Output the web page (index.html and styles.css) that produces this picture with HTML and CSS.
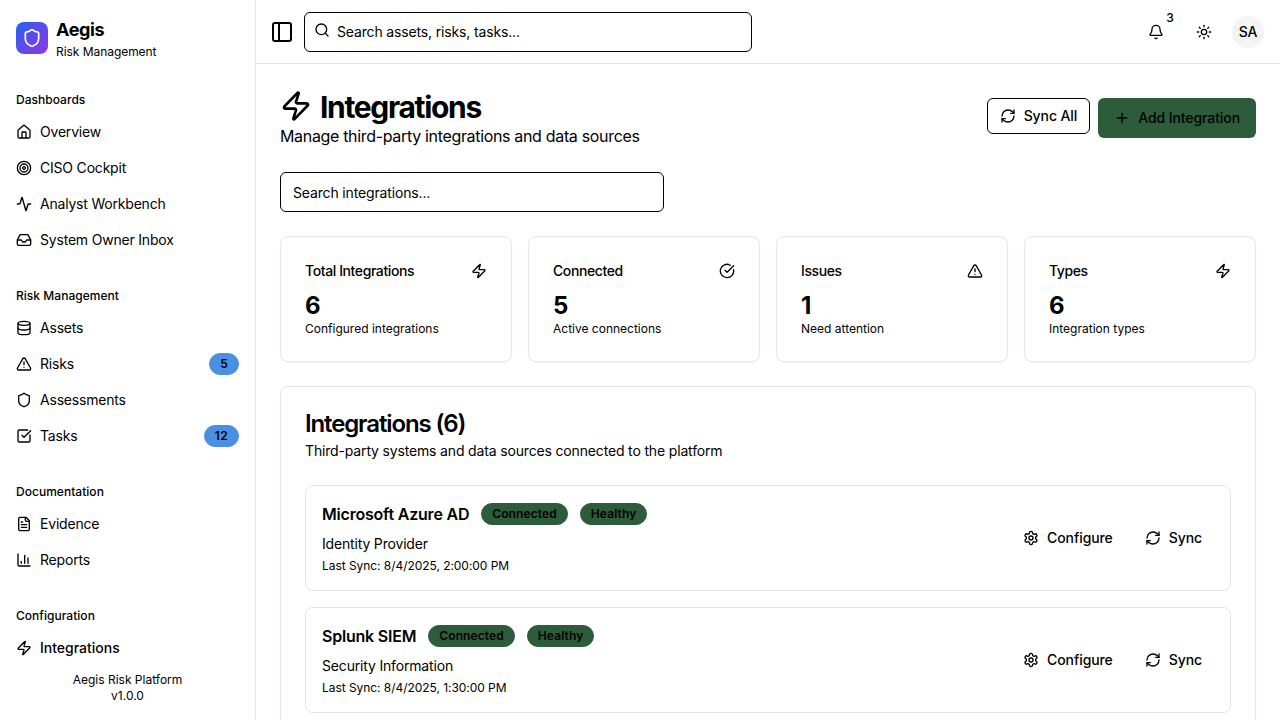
FILE: index.html
```html
<!DOCTYPE html>
<html lang="en">
<head>
<meta charset="utf-8">
<title>Aegis Risk Management</title>
<link rel="stylesheet" href="styles.css">
</head>
<body>
<svg class="sprite" aria-hidden="true">
  <symbol id="shield" viewBox="0 0 24 24"><path d="M20 13c0 5-3.5 7.5-7.66 8.95a1 1 0 0 1-.67-.01C7.5 20.5 4 18 4 13V6a1 1 0 0 1 1-1c2 0 4.5-1.2 6.24-2.72a1.17 1.17 0 0 1 1.52 0C14.51 3.81 17 5 19 5a1 1 0 0 1 1 1z"/></symbol>
  <symbol id="house" viewBox="0 0 24 24"><path d="M15 21v-8a1 1 0 0 0-1-1h-4a1 1 0 0 0-1 1v8"/><path d="M3 10a2 2 0 0 1 .709-1.528l7-5.999a2 2 0 0 1 2.582 0l7 5.999A2 2 0 0 1 21 10v9a2 2 0 0 1-2 2H5a2 2 0 0 1-2-2z"/></symbol>
  <symbol id="target" viewBox="0 0 24 24"><circle cx="12" cy="12" r="10"/><circle cx="12" cy="12" r="6"/><circle cx="12" cy="12" r="2"/></symbol>
  <symbol id="activity" viewBox="0 0 24 24"><path d="M22 12h-2.48a2 2 0 0 0-1.93 1.46l-2.35 8.36a.25.25 0 0 1-.48 0L9.24 2.18a.25.25 0 0 0-.48 0l-2.35 8.36A2 2 0 0 1 4.49 12H2"/></symbol>
  <symbol id="inbox" viewBox="0 0 24 24"><polyline points="22 12 16 12 14 15 10 15 8 12 2 12"/><path d="M5.45 5.11 2 12v6a2 2 0 0 0 2 2h16a2 2 0 0 0 2-2v-6l-3.45-6.89A2 2 0 0 0 16.76 4H7.24a2 2 0 0 0-1.79 1.11z"/></symbol>
  <symbol id="database" viewBox="0 0 24 24"><ellipse cx="12" cy="5" rx="9" ry="3"/><path d="M3 5V19A9 3 0 0 0 21 19V5"/><path d="M3 12A9 3 0 0 0 21 12"/></symbol>
  <symbol id="alert" viewBox="0 0 24 24"><path d="m21.73 18-8-14a2 2 0 0 0-3.48 0l-8 14A2 2 0 0 0 4 21h16a2 2 0 0 0 1.73-3"/><path d="M12 9v4"/><path d="M12 17h.01"/></symbol>
  <symbol id="check-square" viewBox="0 0 24 24"><path d="M21 10.5V19a2 2 0 0 1-2 2H5a2 2 0 0 1-2-2V5a2 2 0 0 1 2-2h12.5"/><path d="m9 11 3 3L22 4"/></symbol>
  <symbol id="file" viewBox="0 0 24 24"><path d="M15 2H6a2 2 0 0 0-2 2v16a2 2 0 0 0 2 2h12a2 2 0 0 0 2-2V7Z"/><path d="M14 2v4a2 2 0 0 0 2 2h4"/><path d="M10 9H8"/><path d="M16 13H8"/><path d="M16 17H8"/></symbol>
  <symbol id="chart" viewBox="0 0 24 24"><path d="M3 3v16a2 2 0 0 0 2 2h16"/><path d="M18 17V9"/><path d="M13 17V5"/><path d="M8 17v-3"/></symbol>
  <symbol id="zap" viewBox="0 0 24 24"><path d="M4 14a1 1 0 0 1-.78-1.63l9.9-10.2a.5.5 0 0 1 .86.46l-1.92 6.02A1 1 0 0 0 13 10h7a1 1 0 0 1 .78 1.63l-9.9 10.2a.5.5 0 0 1-.86-.46l1.92-6.02A1 1 0 0 0 11 14z"/></symbol>
  <symbol id="panel" viewBox="0 0 24 24"><rect width="18" height="18" x="3" y="3" rx="2"/><path d="M9 3v18"/></symbol>
  <symbol id="search" viewBox="0 0 24 24"><circle cx="11" cy="11" r="8"/><path d="m21 21-4.3-4.3"/></symbol>
  <symbol id="bell" viewBox="0 0 24 24"><path d="M10.268 21a2 2 0 0 0 3.464 0"/><path d="M3.262 15.326A1 1 0 0 0 4 17h16a1 1 0 0 0 .74-1.673C19.41 13.956 18 12.499 18 8A6 6 0 0 0 6 8c0 4.499-1.411 5.956-2.738 7.326"/></symbol>
  <symbol id="sun" viewBox="0 0 24 24"><circle cx="12" cy="12" r="4"/><path d="M12 2v2"/><path d="M12 20v2"/><path d="m4.93 4.93 1.41 1.41"/><path d="m17.66 17.66 1.41 1.41"/><path d="M2 12h2"/><path d="M20 12h2"/><path d="m6.34 17.66-1.41 1.41"/><path d="m19.07 4.93-1.41 1.41"/></symbol>
  <symbol id="refresh" viewBox="0 0 24 24"><path d="M3 12a9 9 0 0 1 9-9 9.75 9.75 0 0 1 6.74 2.74L21 8"/><path d="M21 3v5h-5"/><path d="M21 12a9 9 0 0 1-9 9 9.75 9.75 0 0 1-6.74-2.74L3 16"/><path d="M8 16H3v5"/></symbol>
  <symbol id="plus" viewBox="0 0 24 24"><path d="M5 12h14"/><path d="M12 5v14"/></symbol>
  <symbol id="check-circle" viewBox="0 0 24 24"><path d="M21.801 10A10 10 0 1 1 17 3.335"/><path d="m9 11 3 3L22 4"/></symbol>
  <symbol id="gear" viewBox="0 0 24 24"><path d="M12.22 2h-.44a2 2 0 0 0-2 2v.18a2 2 0 0 1-1 1.73l-.43.25a2 2 0 0 1-2 0l-.15-.08a2 2 0 0 0-2.73.73l-.22.38a2 2 0 0 0 .73 2.73l.15.1a2 2 0 0 1 1 1.72v.51a2 2 0 0 1-1 1.74l-.15.09a2 2 0 0 0-.73 2.73l.22.38a2 2 0 0 0 2.73.73l.15-.08a2 2 0 0 1 2 0l.43.25a2 2 0 0 1 1 1.73V20a2 2 0 0 0 2 2h.44a2 2 0 0 0 2-2v-.18a2 2 0 0 1 1-1.73l.43-.25a2 2 0 0 1 2 0l.15.08a2 2 0 0 0 2.73-.73l.22-.39a2 2 0 0 0-.73-2.73l-.15-.08a2 2 0 0 1-1-1.74v-.5a2 2 0 0 1 1-1.74l.15-.09a2 2 0 0 0 .73-2.73l-.22-.38a2 2 0 0 0-2.73-.73l-.15.08a2 2 0 0 1-2 0l-.43-.25a2 2 0 0 1-1-1.73V4a2 2 0 0 0-2-2z"/><circle cx="12" cy="12" r="3"/></symbol>
</svg>

<div class="app">
  <aside class="sidebar">
    <div class="brand">
      <div class="brand-logo"><svg class="icon icon-logo"><use href="#shield"/></svg></div>
      <div>
        <div class="brand-name">Aegis</div>
        <div class="brand-sub">Risk Management</div>
      </div>
    </div>
    <nav class="nav">
      <section class="nav-group">
        <div class="nav-label">Dashboards</div>
        <div class="nav-list">
          <a class="nav-item"><svg class="icon"><use href="#house"/></svg><span>Overview</span></a>
          <a class="nav-item"><svg class="icon"><use href="#target"/></svg><span>CISO Cockpit</span></a>
          <a class="nav-item"><svg class="icon"><use href="#activity"/></svg><span>Analyst Workbench</span></a>
          <a class="nav-item"><svg class="icon"><use href="#inbox"/></svg><span>System Owner Inbox</span></a>
        </div>
      </section>
      <section class="nav-group">
        <div class="nav-label">Risk Management</div>
        <div class="nav-list">
          <a class="nav-item"><svg class="icon"><use href="#database"/></svg><span>Assets</span></a>
          <a class="nav-item"><svg class="icon"><use href="#alert"/></svg><span>Risks</span><span class="badge badge-blue">5</span></a>
          <a class="nav-item"><svg class="icon"><use href="#shield"/></svg><span>Assessments</span></a>
          <a class="nav-item"><svg class="icon"><use href="#check-square"/></svg><span>Tasks</span><span class="badge badge-blue">12</span></a>
        </div>
      </section>
      <section class="nav-group">
        <div class="nav-label">Documentation</div>
        <div class="nav-list">
          <a class="nav-item"><svg class="icon"><use href="#file"/></svg><span>Evidence</span></a>
          <a class="nav-item"><svg class="icon"><use href="#chart"/></svg><span>Reports</span></a>
        </div>
      </section>
      <section class="nav-group">
        <div class="nav-label">Configuration</div>
        <div class="nav-list">
          <a class="nav-item nav-item-active"><svg class="icon"><use href="#zap"/></svg><span>Integrations</span></a>
        </div>
      </section>
    </nav>
    <footer class="sidebar-footer"><div>Aegis Risk Platform</div><div>v1.0.0</div></footer>
  </aside>

  <div class="page">
    <header class="topbar">
      <button class="trigger"><svg class="icon icon-24"><use href="#panel"/></svg></button>
      <div class="search">
        <svg class="icon search-icon"><use href="#search"/></svg>
        <input class="input input-icon" type="text" placeholder="Search assets, risks, tasks...">
      </div>
      <div class="topbar-actions">
        <button class="icon-button"><svg class="icon"><use href="#bell"/></svg><span class="count">3</span></button>
        <button class="icon-button"><svg class="icon"><use href="#sun"/></svg></button>
        <div class="avatar">SA</div>
      </div>
    </header>

    <main class="main">
      <div class="page-head">
        <div>
          <h1 class="title"><svg class="icon icon-32"><use href="#zap"/></svg><span class="title-text">Integrations</span></h1>
          <p class="subtitle">Manage third-party integrations and data sources</p>
        </div>
        <div class="page-actions">
          <button class="button button-outline"><svg class="icon"><use href="#refresh"/></svg>Sync All</button>
          <button class="button button-primary"><svg class="icon"><use href="#plus"/></svg>Add Integration</button>
        </div>
      </div>

      <input class="input filter" type="text" placeholder="Search integrations...">

      <div class="stats">
        <div class="card stat">
          <div class="stat-head"><span>Total Integrations</span><svg class="icon"><use href="#zap"/></svg></div>
          <div class="stat-value">6</div><div class="stat-note">Configured integrations</div>
        </div>
        <div class="card stat">
          <div class="stat-head"><span>Connected</span><svg class="icon"><use href="#check-circle"/></svg></div>
          <div class="stat-value">5</div><div class="stat-note">Active connections</div>
        </div>
        <div class="card stat">
          <div class="stat-head"><span>Issues</span><svg class="icon"><use href="#alert"/></svg></div>
          <div class="stat-value">1</div><div class="stat-note">Need attention</div>
        </div>
        <div class="card stat">
          <div class="stat-head"><span>Types</span><svg class="icon"><use href="#zap"/></svg></div>
          <div class="stat-value">6</div><div class="stat-note">Integration types</div>
        </div>
      </div>

      <section class="card panel">
        <h2 class="panel-title">Integrations (6)</h2>
        <p class="panel-desc">Third-party systems and data sources connected to the platform</p>
        <div class="rows">
          <article class="row">
            <div>
              <div class="row-head"><h3 class="row-title">Microsoft Azure AD</h3><span class="badge badge-green">Connected</span><span class="badge badge-green">Healthy</span></div>
              <p class="row-type">Identity Provider</p>
              <p class="row-sync">Last Sync: 8/4/2025, 2:00:00 PM</p>
            </div>
            <div class="row-actions">
              <button class="button button-ghost"><svg class="icon"><use href="#gear"/></svg>Configure</button>
              <button class="button button-ghost"><svg class="icon"><use href="#refresh"/></svg>Sync</button>
            </div>
          </article>
          <article class="row">
            <div>
              <div class="row-head"><h3 class="row-title">Splunk SIEM</h3><span class="badge badge-green">Connected</span><span class="badge badge-green">Healthy</span></div>
              <p class="row-type">Security Information</p>
              <p class="row-sync">Last Sync: 8/4/2025, 1:30:00 PM</p>
            </div>
            <div class="row-actions">
              <button class="button button-ghost"><svg class="icon"><use href="#gear"/></svg>Configure</button>
              <button class="button button-ghost"><svg class="icon"><use href="#refresh"/></svg>Sync</button>
            </div>
          </article>
        </div>
      </section>
    </main>
  </div>
</div>
</body>
</html>
```
FILE: styles.css
```css
*, *::before, *::after { box-sizing: border-box; }
body {
  margin: 0;
  font-family: Inter, "Liberation Sans", sans-serif;
  font-size: 16px;
  line-height: 24px;
  color: #000;
  background: #fff;
}
h1, h2, h3, p { margin: 0; }
button { font: inherit; color: inherit; background: none; border: 0; padding: 0; }
.sprite { display: none; }

.icon {
  flex: none;
  width: 16px;
  height: 16px;
  fill: none;
  stroke: currentColor;
  stroke-width: 2;
  stroke-linecap: round;
  stroke-linejoin: round;
}
.icon-24 { width: 24px; height: 24px; }
.icon-32 { width: 32px; height: 32px; }
.icon-logo { width: 20px; height: 20px; color: #fff; }

.app { display: flex; height: 100vh; overflow: hidden; }

/* Sidebar */
.sidebar {
  flex: none;
  display: flex;
  flex-direction: column;
  width: 256px;
  border-right: 1px solid #e5e5e5;
}
.brand { display: flex; align-items: center; gap: 8px; padding: 16px; }
.brand-logo {
  display: flex;
  align-items: center;
  justify-content: center;
  width: 32px;
  height: 32px;
  border-radius: 8px;
  background: linear-gradient(to bottom right, #2563eb, #9333ea);
}
.brand-name { font-size: 18px; line-height: 28px; font-weight: 700; letter-spacing: -0.4px; }
.brand-sub { font-size: 12px; line-height: 16px; letter-spacing: -0.05px; }
.nav { flex: 1; min-height: 0; display: flex; flex-direction: column; gap: 8px; overflow: hidden; }
.nav-group { flex: none; padding: 8px; }
.nav-label {
  display: flex;
  align-items: center;
  height: 32px;
  padding: 0 8px;
  font-size: 12px;
  font-weight: 500;
  letter-spacing: 0.03px;
}
.nav-list { display: flex; flex-direction: column; gap: 4px; }
.nav-item {
  display: flex;
  align-items: center;
  gap: 8px;
  height: 32px;
  padding: 0 8px;
  font-size: 14px;
  line-height: 20px;
  letter-spacing: -0.2px;
}
.nav-item-active { font-weight: 500; letter-spacing: 0; }
.nav-item .badge { margin-left: auto; }
.sidebar-footer { flex: none; padding: 16px; font-size: 12px; line-height: 16px; text-align: center; }

.badge {
  padding: 2px 10px;
  border: 1px solid transparent;
  border-radius: 11px;
  font-size: 12px;
  line-height: 16px;
  font-weight: 600;
  letter-spacing: 0.1px;
}
.badge-blue { background: #4a90e2; border-color: #4a90e2; letter-spacing: 0.3px; }
.badge-green { background: #2d5c3a; border-color: #2d5c3a; }

/* Top bar */
.page { flex: 1; min-width: 0; display: flex; flex-direction: column; }
.topbar {
  flex: none;
  display: flex;
  align-items: center;
  gap: 8px;
  height: 64px;
  padding: 0 16px 0 12px;
  border-bottom: 1px solid #e5e5e5;
}
.trigger { display: flex; align-items: center; justify-content: center; width: 28px; height: 28px; }
.search { position: relative; width: 448px; height: 40px; }
.search-icon { position: absolute; left: 10px; top: 10px; }
.input {
  display: block;
  width: 100%;
  height: 40px;
  padding: 8px 12px;
  border: 1px solid #000;
  border-radius: 6px;
  background: #fff0;
  font-family: inherit;
  font-size: 14px;
  line-height: 20px;
  letter-spacing: -0.15px;
}
.input::placeholder { color: #000; opacity: 1; }
.input-icon { padding-left: 32px; }
.topbar-actions { display: flex; align-items: center; gap: 8px; margin-left: auto; }
.icon-button {
  position: relative;
  display: flex;
  align-items: center;
  justify-content: center;
  width: 40px;
  height: 40px;
}
.count {
  position: absolute;
  top: -4px;
  right: -4px;
  width: 20px;
  font-size: 12px;
  line-height: 20px;
  font-weight: 500;
  text-align: center;
}
.avatar {
  width: 32px;
  height: 32px;
  border-radius: 50%;
  background: #f4f4f4;
  font-size: 14px;
  line-height: 32px;
  font-weight: 500;
  letter-spacing: -0.2px;
  text-align: center;
}

/* Content */
.main {
  flex: 1;
  min-height: 0;
  display: flex;
  flex-direction: column;
  gap: 24px;
  padding: 24px 24px 0;
  overflow: hidden;
}
.page-head { display: flex; align-items: center; justify-content: space-between; }
.title {
  display: flex;
  align-items: center;
  gap: 8px;
  font-size: 30px;
  line-height: 36px;
  font-weight: 700;
  letter-spacing: -1.33px;
}
.title-text { padding-top: 2px; line-height: 34px; }
.subtitle { letter-spacing: -0.33px; }
.page-actions { display: flex; align-items: flex-start; gap: 8px; }
.button {
  display: flex;
  align-items: center;
  gap: 8px;
  height: 36px;
  padding: 0 12px;
  border-radius: 6px;
  font-size: 14px;
  line-height: 20px;
  font-weight: 500;
  letter-spacing: -0.09px;
}
.button-outline { border: 1px solid #000; }
.button-primary { height: 40px; padding: 0 16px; background: #2d5c3a; }
.filter { flex: none; max-width: 384px; }

.card {
  flex: none;
  border: 1px solid #e5e5e5;
  border-radius: 8px;
  padding: 24px;
  box-shadow: 0 1px 2px rgba(0, 0, 0, 0.05);
}
.stats { flex: none; display: grid; grid-template-columns: repeat(4, 1fr); gap: 16px; }
.stat-head {
  display: flex;
  align-items: center;
  justify-content: space-between;
  padding-bottom: 8px;
  font-size: 14px;
  line-height: 20px;
  font-weight: 500;
  letter-spacing: -0.4px;
}
.stat-value { padding-top: 2px; font-size: 24px; line-height: 30px; font-weight: 700; }
.stat-note { font-size: 12px; line-height: 16px; }

.panel { min-height: 480px; }
.panel-title {
  padding-top: 2px;
  font-size: 24px;
  line-height: 22px;
  font-weight: 600;
  letter-spacing: -1.13px;
}
.panel-desc { margin-top: 6px; font-size: 14px; line-height: 20px; letter-spacing: -0.16px; }
.rows { display: flex; flex-direction: column; gap: 16px; margin-top: 24px; }
.row {
  display: flex;
  align-items: center;
  justify-content: space-between;
  padding: 16px;
  border: 1px solid #e5e5e5;
  border-radius: 8px;
}
.row-head { display: flex; align-items: center; gap: 12px; }
.row-title { font-size: 16px; line-height: 24px; font-weight: 600; letter-spacing: -0.21px; }
.row-type { margin-top: 8px; font-size: 14px; line-height: 20px; letter-spacing: -0.17px; }
.row-sync { margin-top: 4px; font-size: 12px; line-height: 16px; letter-spacing: -0.05px; }
.row-actions { display: flex; gap: 8px; }
```
